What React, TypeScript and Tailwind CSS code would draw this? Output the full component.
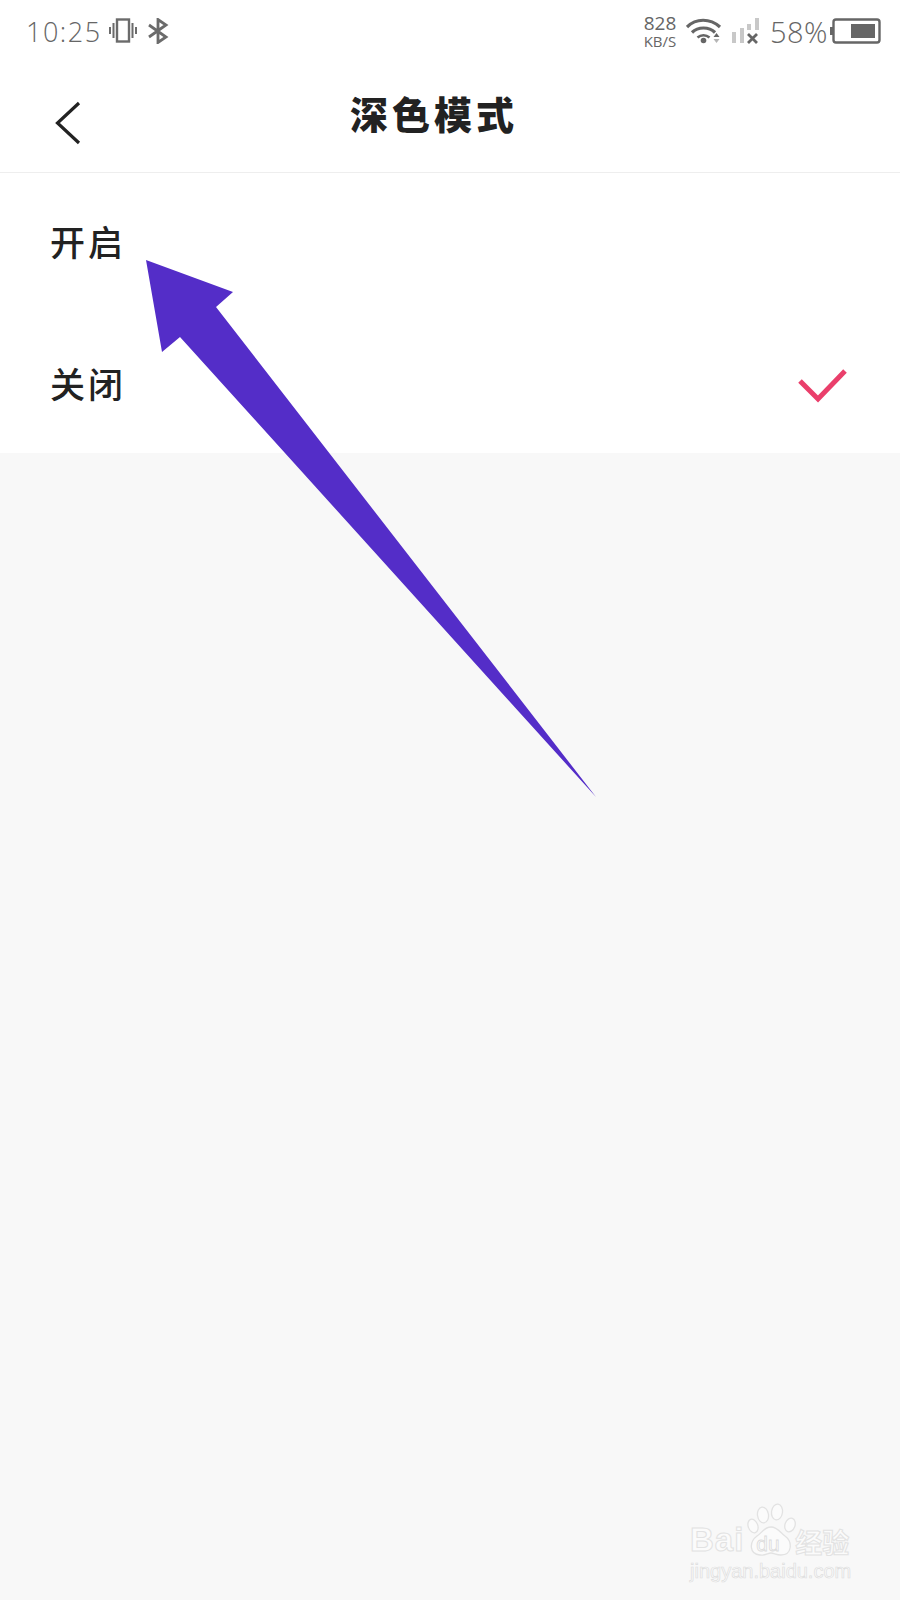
const cjk = "font-['Noto_Sans_CJK_SC','Noto_Sans',sans-serif]";

function Vibrate() {
  return (
    <svg width="28" height="26" viewBox="0 0 28 26" fill="none" stroke="#6b6b6b" strokeWidth="2">
      <rect x="8" y="1.500" width="12" height="22" strokeWidth="2.400" />
      <path d="M4.500 5v15M1 9v7M23.500 5v15M27 9v7" strokeWidth="2" />
    </svg>
  );
}
function Bluetooth() {
  return (
    <svg width="22" height="26" viewBox="0 0 22 26" fill="none" stroke="#6b6b6b" strokeWidth="2.800">
      <path d="M2 7l17 12-8 5.500V1.500l8 5.500L2 19" />
    </svg>
  );
}
function Wifi() {
  return (
    <svg width="36" height="26" viewBox="0 0 36 26" fill="none">
      <path d="M1 9c9-9 23-9 33 0" stroke="#666" strokeWidth="3.200" />
      <path d="M6 14.500c6-6 17-6 23 0" stroke="#666" strokeWidth="3.200" />
      <path d="M11.500 19.500c3.500-3 8.500-3 12 0" stroke="#666" strokeWidth="2.600" />
      <circle cx="17.500" cy="22.500" r="2.800" fill="#666" />
      <path d="M30.500 15l3 4h-6z" fill="#666" />
      <path d="M30.500 25l3-4h-6z" fill="#b5b5b5" />
    </svg>
  );
}
function Signal() {
  return (
    <svg width="28" height="26" viewBox="0 0 28 26">
      <rect x="0" y="14" width="4" height="11" fill="#c8c8c8" />
      <rect x="8" y="10" width="4" height="15" fill="#c8c8c8" />
      <rect x="15" y="6" width="4" height="6" fill="#c8c8c8" />
      <rect x="23" y="0" width="4" height="12" fill="#c8c8c8" />
      <path d="M16 16l9 9M25 16l-9 9" stroke="#666" strokeWidth="2.800" />
    </svg>
  );
}
function Battery() {
  return (
    <svg width="51" height="26" viewBox="0 0 51 26">
      <rect x="0" y="9" width="3" height="8" fill="#666" />
      <rect x="3.500" y="1.500" width="46" height="23" rx="2.500" fill="none" stroke="#666" strokeWidth="2.400" />
      <rect x="21" y="6" width="24" height="14" fill="#666" />
    </svg>
  );
}

function Paw() {
  return (
    <svg width="50" height="54" viewBox="0 0 50 54" fill="#fbfbfb" stroke="#e2e2e2" strokeWidth="1.300">
      <ellipse cx="16" cy="12" rx="5.500" ry="8" transform="rotate(-8 16 12)" />
      <ellipse cx="30" cy="9" rx="5.500" ry="8" transform="rotate(8 30 9)" />
      <ellipse cx="6" cy="23" rx="4.800" ry="7" transform="rotate(-20 6 23)" />
      <ellipse cx="43" cy="22" rx="5" ry="7" transform="rotate(20 43 22)" />
      <path d="M24 24c6 0 9 5 14 9 8 6 7 19-4 19-5 0-7-2-10-2s-6 3-11 2C2 51 2 39 10 33c5-3 7-9 14-9z" />
    </svg>
  );
}

export default function App() {
  return (
    <div className="relative w-[900px] h-[1600px] overflow-hidden bg-[#f8f8f8]">
      <header className="bg-white">
        <div className="h-[68px] flex items-center justify-between pl-[26px] pr-[19px] pb-[6px]">
          <div className="flex items-center">
            <span className="font-['Open_Sans',sans-serif] font-light text-[27px] leading-none tracking-[1.500px] text-[#666]">10:25</span>
            <span className="ml-[7px] flex"><Vibrate /></span>
            <span className="ml-[10px] flex"><Bluetooth /></span>
          </div>
          <div className="flex items-center">
            <div className="w-[36px] flex flex-col items-center gap-[3px] font-['Open_Sans',sans-serif] text-[#666]">
              <span className="text-[19px] leading-[18px]">828</span>
              <span className="text-[15px] leading-[13px]">KB/S</span>
            </div>
            <span className="ml-[8px] flex"><Wifi /></span>
            <span className="ml-[10px] flex"><Signal /></span>
            <span className="ml-[10px] font-['Open_Sans',sans-serif] font-light text-[29px] leading-none tracking-[0.500px] text-[#666]">58%</span>
            <span className="ml-[2px] flex"><Battery /></span>
          </div>
        </div>
        <div className="h-[105px] flex items-center border-b border-[#eeeeee] pl-[55px]">
          <svg className="mt-[6px]" width="26" height="44" viewBox="0 0 26 44" fill="none" stroke="#222" strokeWidth="3.200">
            <path d="M24 2L2.500 22 24 42" />
          </svg>
          <h1 className={`ml-[269px] mb-[14px] ${cjk} font-black text-[38px] leading-none tracking-[4px] text-[#222]`}>深色模式</h1>
        </div>
      </header>

      <ul className={`bg-white ${cjk} font-medium text-[35px] leading-none tracking-[3px] text-[#222]`}>
        <li className="h-[141px] flex items-center pl-[50px] pb-[6px]">开启</li>
        <li className="h-[139px] flex items-center justify-between pl-[50px] pr-[52px] pb-[3px]">
          <span>关闭</span>
          <svg className="mt-[10px]" width="50" height="36" viewBox="0 0 50 36" fill="none" stroke="#ea3f6b" strokeWidth="5">
            <path d="M2 12l18 18L47 2" />
          </svg>
        </li>
      </ul>

      <svg className="absolute left-0 top-0" width="900" height="820" viewBox="0 0 900 820">
        <path d="M146 260L233 292 216 307 596 797 180 337 162 352Z" fill="#542dc8" />
      </svg>

      <div className="absolute left-[690px] top-[1503px] w-[170px]">
        <div className="flex items-end h-[54px]">
          <span className="font-['Liberation_Sans',sans-serif] font-bold text-[33px] tracking-[1px] leading-[33px] text-[#fbfbfb] [-webkit-text-stroke:1px_#e2e2e2] mb-[1px]">Bai</span>
          <span className="relative ml-[3px] flex">
            <Paw />
            <span className="absolute left-[9px] top-[30px] font-['Liberation_Sans',sans-serif] text-[21px] leading-none text-[#fbfbfb] [-webkit-text-stroke:0.8px_#dcdcdc]">du</span>
          </span>
          <span className={`${cjk} -ml-[2px] mb-[2px] font-bold text-[27px] leading-none text-[#fbfbfb] [-webkit-text-stroke:1px_#e2e2e2]`}>经验</span>
        </div>
        <div className="mt-[4px] font-['Liberation_Sans',sans-serif] text-[20px] leading-none whitespace-nowrap text-[#fbfbfb] [-webkit-text-stroke:0.7px_#dedede]">jingyan.baidu.com</div>
      </div>
    </div>
  );
}
